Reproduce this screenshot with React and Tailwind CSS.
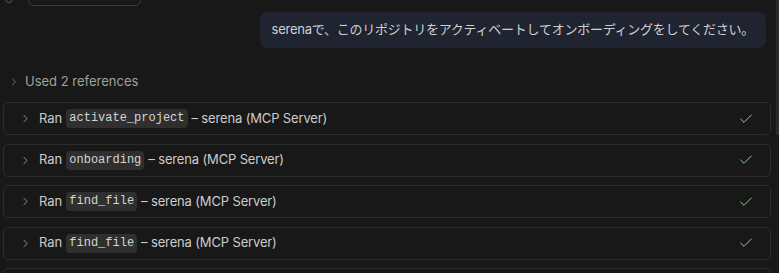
import { Check, ChevronRight } from 'lucide-react'

const tools = ['activate_project', 'onboarding', 'find_file', 'find_file']

function ToolRow({ name }) {
  return (
    <div className="h-[33px] shrink-0 flex items-center rounded-[5px] border border-[#2c2c2c] bg-[#181818] pl-[15px] pr-[16px]">
      <ChevronRight size={13} strokeWidth={1.5} className="text-[#a8a8a8]" />
      <span className="ml-[7px] text-[13px] text-[#cccccc]">Ran</span>
      <code className="ml-[4px] px-[3px] rounded-[4px] bg-[#2f2f2f] text-[12px] leading-[19px] text-[#d4d4d4] font-['Liberation_Mono',monospace]">
        {name}
      </code>
      <span className="ml-[4px] text-[13px] tracking-[-0.15px] text-[#cccccc]">– serena (MCP Server)</span>
      <Check size={16} strokeWidth={1.5} className="ml-auto text-[#89d185]" />
    </div>
  )
}

export default function App() {
  return (
    <div className="relative w-[779px] h-[273px] overflow-hidden bg-[#181818] font-['Inter','Noto_Sans_CJK_JP',sans-serif]">
      <div className="flex items-start">
        <div className="ml-[5px] -mt-[5px] w-[8px] h-[8px] rounded-sm border border-[#5a5a5a]" />
        <div className="ml-[15px] -mt-[16px] w-[113px] h-[22px] rounded-md border border-[#3a3a3a]" />
      </div>

      <div className="flex justify-end pr-[13px] mt-[6px]">
        <div className="h-[36px] flex items-center px-[12px] rounded-[8px] bg-[#1f2430] text-[13px] tracking-[-0.25px] text-[#d0d0d0]">
          serenaで、このリポジトリをアクティベートしてオンボーディングをしてください。
        </div>
      </div>

      <div className="mt-[25px] flex items-center h-[18px] pl-[8px] text-[13px] text-[#a0a0a0]">
        <ChevronRight size={12} strokeWidth={1.5} className="text-[#8a8a8a]" />
        <span className="ml-[5px]">Used 2 references</span>
      </div>

      <div className="mt-[11px] pl-[3px] pr-[8px] flex flex-col gap-[8.5px]">
        {tools.map((t, i) => (
          <ToolRow key={i} name={t} />
        ))}
        <div className="h-[33px] shrink-0 rounded-[5px] border border-[#2c2c2c]" />
      </div>

      <div className="absolute right-0 top-0 w-[3px] h-[135px] bg-[#2a2a2a]" />
    </div>
  )
}
